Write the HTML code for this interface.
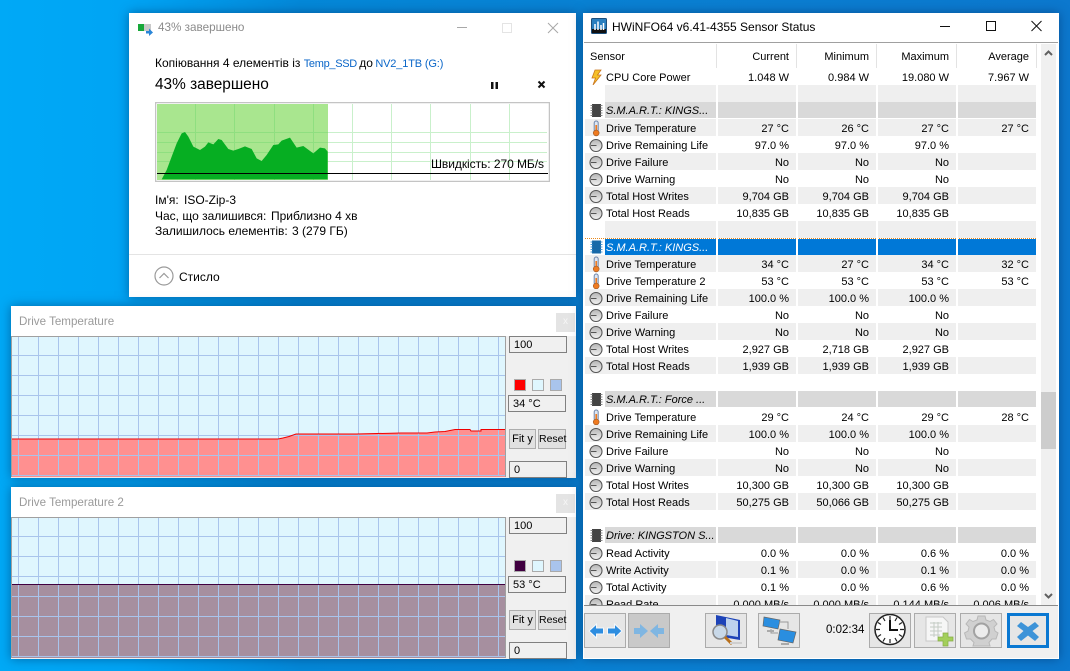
<!DOCTYPE html>
<html><head><meta charset="utf-8">
<style>
html,body{margin:0;padding:0}
body{width:1070px;height:671px;overflow:hidden;position:relative;background:linear-gradient(90deg,#00a9f6 0,#00a4f4 12%,#0488d8 28%,#0a80d2 60%,#0c78ce 100%);font-family:"Liberation Sans",sans-serif;color:#000}
.a{position:absolute}
.t{position:absolute;white-space:nowrap;font-size:12px;line-height:16px}
.win{position:absolute;background:#fff;box-shadow:0 0 10px rgba(0,40,90,.5)}
.r{position:absolute;left:585px;width:451px;height:17px;font-size:11px;line-height:17px;white-space:nowrap}
.r.g{background:#efefef}
.r.e{background:linear-gradient(90deg,#fff 20px,#efefef 20px)}
.r.h{height:16px;background:linear-gradient(90deg,#fff 20px,#d9d9d9 20px)}
.r.s{height:16px;background:linear-gradient(90deg,#fff 20px,#0078d7 20px);color:#fff}
.r svg{position:absolute;left:3px;top:1px}
.r.h svg,.r.s svg{top:0}
.r b{font-weight:normal;position:absolute;left:21px;top:2px}
.r.h b,.r.s b{font-style:italic;top:1px}
.r u{text-decoration:none;position:absolute;width:78px;text-align:right;top:2px}
.r u:nth-of-type(1){left:126px}
.r u:nth-of-type(2){left:206px}
.r u:nth-of-type(3){left:286px}
.r u:nth-of-type(4){left:366px}
.hd{position:absolute;font-size:11px;line-height:14px;width:78px;text-align:right;top:50px}
.vl{position:absolute;width:2px;background:#fff;top:68px;height:537px}
.vh{position:absolute;width:1px;background:#e3e3e3;top:44px;height:24px}
.btn{position:absolute;top:613px;width:40px;height:33px;background:#e6e6e6;border:1px solid #ababab;overflow:hidden}
.box{position:absolute;box-sizing:border-box;background:#f0f0f0;border:1px solid #808080;font-size:11px;line-height:16px;padding-left:4px;height:17px;width:58px;left:509px}
.sw{position:absolute;width:10px;height:10px;border:1px solid #aaa}
.mb{position:absolute;box-sizing:border-box;height:20px;background:#e1e1e1;border:1px solid #adadad;font-size:11px;line-height:18px;text-align:center;white-space:nowrap}
.xb{position:absolute;left:556px;width:19px;height:19px;background:#e4e4e4;color:#f6f6f6;font-size:10px;line-height:18px;text-align:center}
</style></head><body>

<svg width="0" height="0" style="position:absolute">
<defs>
<linearGradient id="gg" x1="0" x2="0" y1="0" y2="1"><stop offset="0" stop-color="#b5b5b5"/><stop offset="1" stop-color="#f2f2f2"/></linearGradient>
<symbol id="th" viewBox="0 0 16 17"><rect x="6.200" y="1" width="4" height="11" rx="2" fill="#dfe7f3" stroke="#6f87ab"/><rect x="7.400" y="5" width="1.700" height="8" fill="#ef7b21"/><circle cx="8.200" cy="13" r="2.900" fill="#ef7b21" stroke="#a85f2a" stroke-width=".7"/></symbol>
<symbol id="ga" viewBox="0 0 16 17"><circle cx="8" cy="8.500" r="6" fill="url(#gg)" stroke="#555" stroke-width="1.100"/><path d="M3 8.500H8.500" stroke="#555" stroke-width="1"/></symbol>
<symbol id="ch" viewBox="0 0 16 17"><rect x="4" y="2" width="9" height="13" fill="#444"/><path d="M2.500 3.500H4.500M2.500 6H4.500M2.500 8.500H4.500M2.500 11H4.500M2.500 13.500H4.500M12.500 3.500H14.500M12.500 6H14.500M12.500 8.500H14.500M12.500 11H14.500M12.500 13.500H14.500" stroke="#888"/></symbol>
<symbol id="chb" viewBox="0 0 16 17"><rect x="4" y="1.500" width="9" height="13" fill="#1769a8"/><path d="M2.500 3H4.500M2.500 5.500H4.500M2.500 8H4.500M2.500 10.500H4.500M2.500 13H4.500M12.500 3H14.500M12.500 5.500H14.500M12.500 8H14.500M12.500 10.500H14.500M12.500 13H14.500" stroke="#4a9bd8"/></symbol>
<symbol id="bo" viewBox="0 0 16 17"><path d="M7 1H13L9.500 6H13L5 16 7.500 9H4Z" fill="#f5c02a" stroke="#c9761c" stroke-width=".8"/></symbol>
</defs>
</svg>

<!-- COPY WINDOW -->
<div class="win" style="left:129px;top:13px;width:447px;height:284px"></div>
<svg class="a" style="left:137px;top:21px" width="18" height="16"><rect x="1" y="3" width="13" height="7" fill="#c9c9c9"/><rect x="1" y="3" width="6" height="7" fill="#17a83a"/><path d="M9 10h3V7.500l4 4-4 3.500V12.500H9Z" fill="#2a86d8"/></svg>
<div class="t" style="left:158px;top:20px;color:#8b8b8b;font-size:11.700px">43% завершено</div>
<svg class="a" style="left:455px;top:20px" width="110" height="16"><path d="M2 7.500H12" stroke="#a8a8a8"/><rect x="47.500" y="3.500" width="9" height="9" fill="none" stroke="#e4e4e4"/><path d="M93 3 103 13M103 3 93 13" stroke="#a8a8a8"/></svg>
<div class="t" style="left:155px;top:55px">Копіювання 4 елементів із <span style="color:#0a66c8;font-size:11px;letter-spacing:-.3px">Temp_SSD</span> <span style="margin-left:-1px">до</span> <span style="color:#0a66c8;font-size:11px;letter-spacing:-.15px;margin-left:-1px">NV2_1TB (G:)</span></div>
<div class="t" style="left:155px;top:76px;font-size:15.400px;line-height:18px">43% завершено</div>
<svg class="a" style="left:488px;top:78px" width="60" height="14"><rect x="3" y="4" width="2.500" height="7" fill="#111"/><rect x="7.500" y="4" width="2.500" height="7" fill="#111"/><path d="M50.500 3.500 56.500 9.500M56.500 3.500 50.500 9.500" stroke="#111" stroke-width="2"/></svg>

<!-- chart -->
<svg class="a" style="left:155px;top:102px" width="395" height="80">
<rect x=".5" y=".5" width="394" height="79" fill="#fff" stroke="#c4c4c4" stroke-width="1.500"/>
<rect x="2" y="2" width="171" height="76" fill="#a9e68f"/>
<g stroke="#c9f0cb" fill="none"><path d="M197.500 2V78M236.500 2V78M275.500 2V78M315.500 2V78M354.500 2V78M173 30.500H392M173 40.500H392M173 50.500H392M173 59.500H392"/></g>
<g stroke="#8fdf80" fill="none"><path d="M40.500 2V78M79.500 2V78M119.500 2V78M158.500 2V78M2 30.500H173M2 40.500H173M2 50.500H173M2 59.500H173"/></g>
<g transform="translate(-5,-7) scale(.3333)"><path d="M20 253L35 253 50 225 65 185 80 145 95 115 105 111 115 125 130 155 150 165 165 155 175 142 190 148 205 132 215 135 235 162 250 167 265 162 285 154 305 162 320 190 335 198 350 180 370 150 385 148 395 137 420 128 440 158 460 153 490 175 510 158 525 160 533 170 533 253Z" fill="#06ae22"/></g>
<path d="M2 71.500H393" stroke="#000" stroke-width="1"/>
</svg>
<div class="t" style="right:526px;top:156px;line-height:16px;letter-spacing:-.05px">Швидкість: 270 МБ/s</div>

<div class="t" style="left:155px;top:192px">Ім'я:</div><div class="t" style="left:184px;top:192px">ISO-Zip-3</div>
<div class="t" style="left:155px;top:208px">Час, що залишився:</div><div class="t" style="left:271px;top:208px">Приблизно 4 хв</div>
<div class="t" style="left:155px;top:223px">Залишилось елементів:</div><div class="t" style="left:292px;top:223px">3 (279 ГБ)</div>
<div class="a" style="left:129px;top:254px;width:447px;height:1px;background:#e4e4e4"></div>
<svg class="a" style="left:154px;top:266px" width="20" height="20"><circle cx="10" cy="10" r="9" fill="none" stroke="#9a9a9a" stroke-width="1.200"/><path d="M5.500 12 10 7.500 14.500 12" fill="none" stroke="#9a9a9a" stroke-width="1.200"/></svg>
<div class="t" style="left:179px;top:269px">Стисло</div>

<!-- GRAPH 1 -->
<div class="win" style="left:11px;top:306px;width:565px;height:172px;background:#f0f0f0"></div>
<div class="a" style="left:11px;top:306px;width:565px;height:30px;background:#fff"></div>
<div class="t" style="left:19px;top:314px;color:#9a9a9a;font-size:11.600px">Drive Temperature</div>
<div class="xb" style="top:313px">x</div>
<svg class="a" style="left:11px;top:336px" width="495" height="141">
<rect width="495" height="141" fill="#dff6fe"/>
<path d="M0 103H267L272 102 278 100.500 285 98H345L390 97 416 97 424 96 434 95.500 444 93.500H459L460 95H470V93.500H495V141H0Z" fill="#ff9090"/>
<g stroke="#a9c4ec" fill="none"><path d="M7.500 0V140M27.500 0V140M47.500 0V140M67.500 0V140M87.500 0V140M107.500 0V140M127.500 0V140M147.500 0V140M167.500 0V140M187.500 0V140M207.500 0V140M227.500 0V140M247.500 0V140M267.500 0V140M287.500 0V140M307.500 0V140M327.500 0V140M347.500 0V140M367.500 0V140M387.500 0V140M407.500 0V140M427.500 0V140M447.500 0V140M467.500 0V140M487.500 0V140M0 19.500H495M0 39.500H495M0 59.500H495M0 79.500H495M0 99.500H495M0 119.500H495M0 139.500H495"/></g>
<path d="M0 103H267L272 102 278 100.500 285 98H345L390 97 416 97 424 96 434 95.500 444 93.500H459L460 95H470V93.500H495" fill="none" stroke="#ee0000" stroke-width="1"/>
<path d="M0 .5H495M494.500 0V141M.5 0V141" stroke="#a0a0a0" fill="none"/>
</svg>
<div class="box" style="top:336px">100</div>
<div class="sw" style="left:514px;top:379px;background:#f00"></div>
<div class="sw" style="left:532px;top:379px;background:#dff6fe"></div>
<div class="sw" style="left:550px;top:379px;background:#a9c4ec"></div>
<div class="box" style="top:395px;left:508px">34 °C</div>
<div class="mb" style="left:509px;top:429px;width:27px">Fit y</div>
<div class="mb" style="left:538px;top:429px;width:28px;font-size:10.500px">Reset</div>
<div class="box" style="top:461px">0</div>

<!-- GRAPH 2 -->
<div class="win" style="left:11px;top:487px;width:565px;height:172px;background:#f0f0f0"></div>
<div class="a" style="left:11px;top:487px;width:565px;height:30px;background:#fff"></div>
<div class="t" style="left:19px;top:495px;color:#9a9a9a;font-size:11.600px">Drive Temperature 2</div>
<div class="xb" style="top:494px">x</div>
<svg class="a" style="left:11px;top:517px" width="495" height="141">
<rect width="495" height="141" fill="#dff6fe"/>
<rect y="67" width="495" height="74" fill="#a68f9f"/>
<g stroke="#a9c4ec" fill="none"><path d="M7.500 0V140M27.500 0V140M47.500 0V140M67.500 0V140M87.500 0V140M107.500 0V140M127.500 0V140M147.500 0V140M167.500 0V140M187.500 0V140M207.500 0V140M227.500 0V140M247.500 0V140M267.500 0V140M287.500 0V140M307.500 0V140M327.500 0V140M347.500 0V140M367.500 0V140M387.500 0V140M407.500 0V140M427.500 0V140M447.500 0V140M467.500 0V140M487.500 0V140M0 19.500H495M0 39.500H495M0 59.500H495M0 79.500H495M0 99.500H495M0 119.500H495M0 139.500H495"/></g>
<path d="M0 67.500H495" stroke="#400040"/>
<path d="M0 .5H495M494.500 0V141M.5 0V141" stroke="#a0a0a0" fill="none"/>
</svg>
<div class="box" style="top:517px">100</div>
<div class="sw" style="left:514px;top:560px;background:#400040"></div>
<div class="sw" style="left:532px;top:560px;background:#dff6fe"></div>
<div class="sw" style="left:550px;top:560px;background:#a9c4ec"></div>
<div class="box" style="top:576px;left:508px">53 °C</div>
<div class="mb" style="left:509px;top:610px;width:27px">Fit y</div>
<div class="mb" style="left:538px;top:610px;width:28px;font-size:10.500px">Reset</div>
<div class="box" style="top:642px">0</div>

<!-- HWINFO -->
<div class="win" style="left:583px;top:13px;width:476px;height:646px;background:#fff"></div>
<svg class="a" style="left:591px;top:18px" width="16" height="16"><rect x=".5" y=".5" width="15" height="15" rx="1" fill="#2a7fbf" stroke="#1c4f7c"/><rect x="1" y="11" width="14" height="4" fill="#111"/><path d="M4 12V6M7 12V3.500M10 12V7M12.500 12V5" stroke="#fff" stroke-width="1.500"/></svg>
<div class="t" style="left:612px;top:19px">HWiNFO64 v6.41-4355 Sensor Status</div>
<svg class="a" style="left:935px;top:17px" width="112" height="18"><path d="M5 9.500H15" stroke="#111"/><rect x="51.500" y="4.500" width="9" height="9" fill="none" stroke="#111"/><path d="M96.500 4 106.500 14M106.500 4 96.500 14" stroke="#111"/></svg>
<div class="a" style="left:584px;top:42px;width:474px;height:1px;background:#a0a0a0"></div>
<div class="a" style="left:1041px;top:44px;width:15px;height:561px;background:#f0f0f0"></div>
<div class="a" style="left:1041px;top:392px;width:15px;height:57px;background:#cdcdcd"></div>
<svg class="a" style="left:1041px;top:47px" width="15" height="12"><path d="M4 8 7.500 4.500 11 8" fill="none" stroke="#606060" stroke-width="2"/></svg>
<svg class="a" style="left:1041px;top:590px" width="15" height="12"><path d="M4 4 7.500 7.500 11 4" fill="none" stroke="#606060" stroke-width="2"/></svg>

<div class="hd" style="left:590px;width:auto;text-align:left">Sensor</div>
<div class="hd" style="left:711px">Current</div>
<div class="hd" style="left:791px">Minimum</div>
<div class="hd" style="left:871px">Maximum</div>
<div class="hd" style="left:951px">Average</div>
<div class="vh" style="left:716px"></div><div class="vh" style="left:796px"></div><div class="vh" style="left:876px"></div><div class="vh" style="left:956px"></div><div class="vh" style="left:1036px"></div>

<div class="a" style="left:0;top:0;width:1036px;height:605px;overflow:hidden">
<div class="r" style="top:68px"><svg width="16" height="17"><use href="#bo"/></svg><b>CPU Core Power</b><u>1.048 W</u><u>0.984 W</u><u>19.080 W</u><u>7.967 W</u></div>
<div class="r e" style="top:85px"></div>
<div class="r h" style="top:102px"><svg width="16" height="17"><use href="#ch"/></svg><b>S.M.A.R.T.: KINGS...</b></div>
<div class="r g" style="top:119px"><svg width="16" height="17"><use href="#th"/></svg><b>Drive Temperature</b><u>27 °C</u><u>26 °C</u><u>27 °C</u><u>27 °C</u></div>
<div class="r" style="top:136px"><svg width="16" height="17"><use href="#ga"/></svg><b>Drive Remaining Life</b><u>97.0 %</u><u>97.0 %</u><u>97.0 %</u></div>
<div class="r g" style="top:153px"><svg width="16" height="17"><use href="#ga"/></svg><b>Drive Failure</b><u>No</u><u>No</u><u>No</u></div>
<div class="r" style="top:170px"><svg width="16" height="17"><use href="#ga"/></svg><b>Drive Warning</b><u>No</u><u>No</u><u>No</u></div>
<div class="r g" style="top:187px"><svg width="16" height="17"><use href="#ga"/></svg><b>Total Host Writes</b><u>9,704 GB</u><u>9,704 GB</u><u>9,704 GB</u></div>
<div class="r" style="top:204px"><svg width="16" height="17"><use href="#ga"/></svg><b>Total Host Reads</b><u>10,835 GB</u><u>10,835 GB</u><u>10,835 GB</u></div>
<div class="r e" style="top:221px"></div>
<div class="a" style="left:585px;top:238px;width:451px;border-top:1px dotted #e8891c"></div>
<div class="r s" style="top:239px"><svg width="16" height="17"><use href="#chb"/></svg><b>S.M.A.R.T.: KINGS...</b></div>
<div class="r g" style="top:255px"><svg width="16" height="17"><use href="#th"/></svg><b>Drive Temperature</b><u>34 °C</u><u>27 °C</u><u>34 °C</u><u>32 °C</u></div>
<div class="r" style="top:272px"><svg width="16" height="17"><use href="#th"/></svg><b>Drive Temperature 2</b><u>53 °C</u><u>53 °C</u><u>53 °C</u><u>53 °C</u></div>
<div class="r g" style="top:289px"><svg width="16" height="17"><use href="#ga"/></svg><b>Drive Remaining Life</b><u>100.0 %</u><u>100.0 %</u><u>100.0 %</u></div>
<div class="r" style="top:306px"><svg width="16" height="17"><use href="#ga"/></svg><b>Drive Failure</b><u>No</u><u>No</u><u>No</u></div>
<div class="r g" style="top:323px"><svg width="16" height="17"><use href="#ga"/></svg><b>Drive Warning</b><u>No</u><u>No</u><u>No</u></div>
<div class="r" style="top:340px"><svg width="16" height="17"><use href="#ga"/></svg><b>Total Host Writes</b><u>2,927 GB</u><u>2,718 GB</u><u>2,927 GB</u></div>
<div class="r g" style="top:357px"><svg width="16" height="17"><use href="#ga"/></svg><b>Total Host Reads</b><u>1,939 GB</u><u>1,939 GB</u><u>1,939 GB</u></div>
<div class="r h" style="top:391px"><svg width="16" height="17"><use href="#ch"/></svg><b>S.M.A.R.T.: Force ...</b></div>
<div class="r" style="top:408px"><svg width="16" height="17"><use href="#th"/></svg><b>Drive Temperature</b><u>29 °C</u><u>24 °C</u><u>29 °C</u><u>28 °C</u></div>
<div class="r g" style="top:425px"><svg width="16" height="17"><use href="#ga"/></svg><b>Drive Remaining Life</b><u>100.0 %</u><u>100.0 %</u><u>100.0 %</u></div>
<div class="r" style="top:442px"><svg width="16" height="17"><use href="#ga"/></svg><b>Drive Failure</b><u>No</u><u>No</u><u>No</u></div>
<div class="r g" style="top:459px"><svg width="16" height="17"><use href="#ga"/></svg><b>Drive Warning</b><u>No</u><u>No</u><u>No</u></div>
<div class="r" style="top:476px"><svg width="16" height="17"><use href="#ga"/></svg><b>Total Host Writes</b><u>10,300 GB</u><u>10,300 GB</u><u>10,300 GB</u></div>
<div class="r g" style="top:493px"><svg width="16" height="17"><use href="#ga"/></svg><b>Total Host Reads</b><u>50,275 GB</u><u>50,066 GB</u><u>50,275 GB</u></div>
<div class="r h" style="top:527px"><svg width="16" height="17"><use href="#ch"/></svg><b>Drive: KINGSTON S...</b></div>
<div class="r" style="top:544px"><svg width="16" height="17"><use href="#ga"/></svg><b>Read Activity</b><u>0.0 %</u><u>0.0 %</u><u>0.6 %</u><u>0.0 %</u></div>
<div class="r g" style="top:561px"><svg width="16" height="17"><use href="#ga"/></svg><b>Write Activity</b><u>0.1 %</u><u>0.0 %</u><u>0.1 %</u><u>0.0 %</u></div>
<div class="r" style="top:578px"><svg width="16" height="17"><use href="#ga"/></svg><b>Total Activity</b><u>0.1 %</u><u>0.0 %</u><u>0.6 %</u><u>0.0 %</u></div>
<div class="r g" style="top:595px"><svg width="16" height="17"><use href="#ga"/></svg><b>Read Rate</b><u>0.000 MB/s</u><u>0.000 MB/s</u><u>0.144 MB/s</u><u>0.006 MB/s</u></div>
</div>
<div class="vl" style="left:716px"></div><div class="vl" style="left:796px"></div><div class="vl" style="left:876px"></div><div class="vl" style="left:956px"></div>

<!-- toolbar -->
<div class="a" style="left:584px;top:605px;width:474px;height:53px;background:#f0f0f0;border-top:1px solid #8a8a8a;box-sizing:border-box"></div>
<div class="btn" style="left:584px"><svg width="40" height="33"><path d="M4 17 11.500 10V14H18.500V20H11.500V24Z" fill="#2d8de0" stroke="#f4f8fc"/><path d="M37 17 29.500 10V14H22.500V20H29.500V24Z" fill="#2d8de0" stroke="#f4f8fc"/></svg></div>
<div class="btn" style="left:628px;background:#c9c9c9"><svg width="40" height="33"><path d="M19 17 11 10V14H5V20H11V24Z" fill="#7fb6e2"/><path d="M21 17 29 10V14H35V20H29V24Z" fill="#7fb6e2"/></svg></div>
<div class="btn" style="left:705px"><svg width="40" height="33"><path d="M10 1 34 6V26L10 22Z" fill="#1d43b8"/><path d="M20 4 32 7V23L20 21Z" fill="#bcd2ee"/><circle cx="14" cy="18" r="7" fill="#c8d8e8" stroke="#8a8a8a" stroke-width="1.500"/><path d="M19 23 26 30" stroke="#b8701c" stroke-width="3"/><path d="M24 29H36" stroke="#cfcfcf" stroke-width="2"/></svg></div>
<div class="btn" style="left:758px"><svg width="40" height="33"><path d="M5 3 21 6 19 15 4 12Z" fill="#2a8ee0" stroke="#666" stroke-width=".7"/><path d="M21 15 37 18 34 29 19 26Z" fill="#2a8ee0" stroke="#666" stroke-width=".7"/><path d="M20 8H29V15M12 15V19H19" fill="none" stroke="#999"/><path d="M8 17H15M22 30H30" stroke="#aaa" stroke-width="2"/></svg></div>
<div class="t" style="left:826px;top:623px;font-size:11.500px;line-height:14px">0:02:34</div>
<div class="btn" style="left:869px"><svg width="40" height="33"><circle cx="20" cy="15.500" r="15" fill="#fff" stroke="#222" stroke-width="1.500"/><path d="M20 2V6M20 25V29M6 15.500H10M30 15.500H34M13 3.500 15 7M27 3.500 25 7M8 8.500 11 10.500M32 8.500 29 10.500M8 22.500 11 20.500M32 22.500 29 20.500M13 27.500 15 24M27 27.500 25 24" stroke="#222" stroke-width="1.200"/><path d="M20 6V16H28" fill="none" stroke="#111" stroke-width="2"/></svg></div>
<div class="btn" style="left:914px"><svg width="40" height="33"><path d="M11 3H28L33 8V27H11Z" fill="#f6f6f6" stroke="#c8c8c8"/><path d="M15 9H27M15 13H27M15 17H27M15 21H25M19 8V23M23 8V23" stroke="#c4cbc4"/><path d="M28 19H33V23H38V27H33V32H28V27H23V23H28Z" fill="#a3cf5a" stroke="#86ad47" stroke-width=".7"/></svg></div>
<div class="btn" style="left:960px"><svg width="40" height="33"><path d="M17 2H24L25 6 29 7.500 32.500 5.500 36 10 33 13 34 17 37 19 35 25 31 25 28 28.500 29 32H12L13 28.500 9.500 25 5.500 25 3.500 19 7 17 8 13 5 10 8.500 5.500 12 7.500 16 6Z" fill="#d0d0d0" stroke="#b8b8b8"/><circle cx="20.500" cy="17" r="7.500" fill="#ececec" stroke="#a2a2a2" stroke-width="2"/></svg></div>
<div class="btn" style="left:1007px;width:36px;height:29px;border:3px solid #0a78d2"><svg width="36" height="29"><path d="M11 6 18 11 25 6 29 10 22.500 15 29 21 25 25 18 19.500 11 25 7 21 13.500 15 7 10Z" fill="#3d93d8"/></svg></div>

</body></html>
